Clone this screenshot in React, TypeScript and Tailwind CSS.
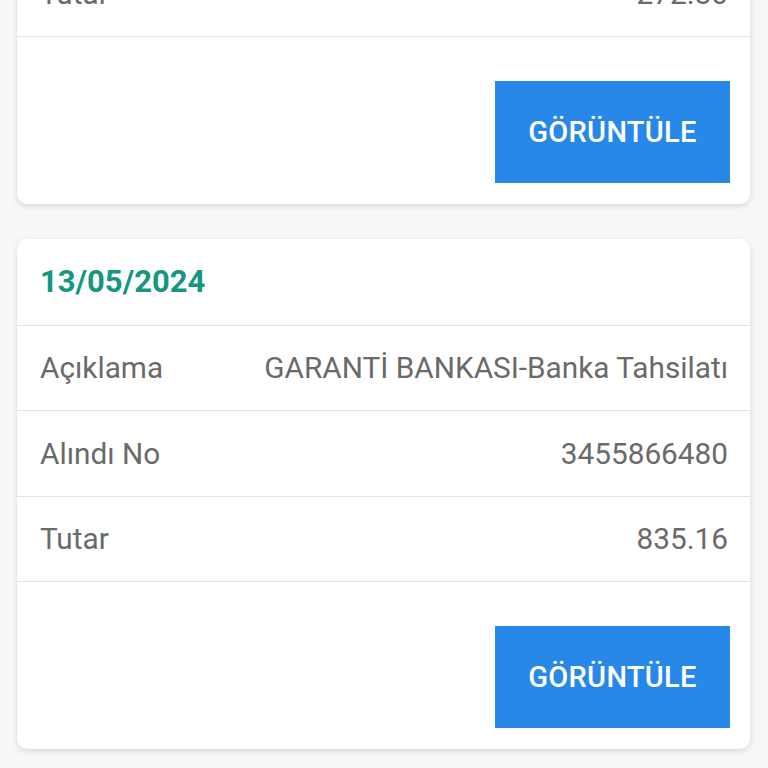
import React from "react";

interface Tahsilat {
  tarih: string;
  aciklama: string;
  alindiNo: string;
  tutar: string;
}

const kayitlar: Tahsilat[] = [
  {
    tarih: "10/05/2024",
    aciklama: "GARANTİ BANKASI-Banka Tahsilatı",
    alindiNo: "3455866479",
    tutar: "272.80",
  },
  {
    tarih: "13/05/2024",
    aciklama: "GARANTİ BANKASI-Banka Tahsilatı",
    alindiNo: "3455866480",
    tutar: "835.16",
  },
];

function Satir({ etiket, deger }: { etiket: string; deger: string }) {
  return (
    <div className="flex h-[85.5px] items-center justify-between border-b border-[#e4e4e4] pl-[23px] pr-[22px] pt-[2px] text-[29.75px] text-[#6a6a6a]">
      <span>{etiket}</span>
      <span>{deger}</span>
    </div>
  );
}

function TahsilatKart({ kayit }: { kayit: Tahsilat }) {
  return (
    <div className="overflow-hidden rounded-[10px] bg-white shadow-[0_2px_6px_rgba(0,0,0,0.13)]">
      {/* Tarih */}
      <div className="flex h-[87px] items-center border-b border-[#e4e4e4] px-[23px] pt-[2px]">
        <span className="text-[31px] font-bold text-[#14977f]">{kayit.tarih}</span>
      </div>

      <Satir etiket="Açıklama" deger={kayit.aciklama} />
      <Satir etiket="Alındı No" deger={kayit.alindiNo} />
      <Satir etiket="Tutar" deger={kayit.tutar} />

      {/* Buton */}
      <div className="flex justify-end pb-[21px] pr-[20px] pt-[44px]">
        <button className="flex h-[102px] w-[235px] items-center justify-center bg-[#2888e8] pt-[2px] text-[29px] font-medium tracking-[0.3px] text-white">
          GÖRÜNTÜLE
        </button>
      </div>
    </div>
  );
}

export default function App() {
  return (
    <div
      className="h-[768px] overflow-hidden bg-[#f7f7f7]"
      style={{ fontFamily: "Roboto, 'Noto Sans', sans-serif" }}
    >
      <div className="-mt-[307px] flex flex-col gap-[35px] pl-[17px] pr-[18px]">
        {kayitlar.map((k) => (
          <TahsilatKart key={k.tarih} kayit={k} />
        ))}
      </div>
    </div>
  );
}
